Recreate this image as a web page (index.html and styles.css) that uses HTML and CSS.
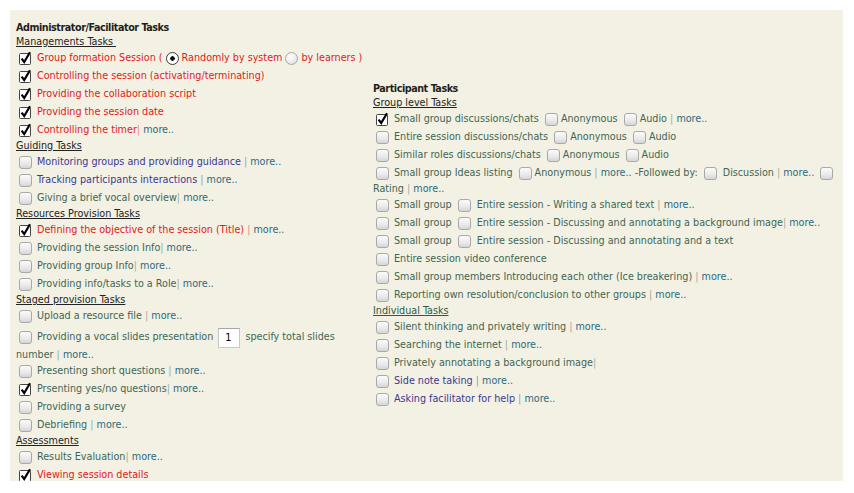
FILE: index.html
```html
<!DOCTYPE html>
<html>
<head>
<meta charset="utf-8">
<title>Tasks</title>
<link rel="stylesheet" href="styles.css">
</head>
<body>
<div class="panel">
  <div class="col left">
    <div class="title">Administrator/Facilitator Tasks</div>
    <div class="sub">Managements Tasks&nbsp;</div>
    <div class="row red"><span class="cb on"><svg width="13" height="13" viewBox="0 0 13 13"><rect x="0.5" y="1.5" width="11" height="11" rx="1" fill="#fff" stroke="#444"/><path d="M2.6 6.6 L5.2 10 L11 0.2" fill="none" stroke="#000" stroke-width="2.2"/></svg></span>Group formation Session ( <span class="rd on"></span>Randomly by system <span class="rd"></span>by learners )</div>
    <div class="row red"><span class="cb on"><svg width="13" height="13" viewBox="0 0 13 13"><rect x="0.5" y="1.5" width="11" height="11" rx="1" fill="#fff" stroke="#444"/><path d="M2.6 6.6 L5.2 10 L11 0.2" fill="none" stroke="#000" stroke-width="2.2"/></svg></span>Controlling the session (activating/terminating)</div>
    <div class="row red"><span class="cb on"><svg width="13" height="13" viewBox="0 0 13 13"><rect x="0.5" y="1.5" width="11" height="11" rx="1" fill="#fff" stroke="#444"/><path d="M2.6 6.6 L5.2 10 L11 0.2" fill="none" stroke="#000" stroke-width="2.2"/></svg></span>Providing the collaboration script</div>
    <div class="row red"><span class="cb on"><svg width="13" height="13" viewBox="0 0 13 13"><rect x="0.5" y="1.5" width="11" height="11" rx="1" fill="#fff" stroke="#444"/><path d="M2.6 6.6 L5.2 10 L11 0.2" fill="none" stroke="#000" stroke-width="2.2"/></svg></span>Providing the session date</div>
    <div class="row red"><span class="cb on"><svg width="13" height="13" viewBox="0 0 13 13"><rect x="0.5" y="1.5" width="11" height="11" rx="1" fill="#fff" stroke="#444"/><path d="M2.6 6.6 L5.2 10 L11 0.2" fill="none" stroke="#000" stroke-width="2.2"/></svg></span>Controlling the timer<span class="sep">|</span> <span class="more">more..</span></div>

    <div class="sub">Guiding Tasks</div>
    <div class="row pur"><span class="cb"></span>Monitoring groups and providing guidance <span class="sep">|</span> <span class="more">more..</span></div>
    <div class="row pur"><span class="cb"></span>Tracking participants interactions <span class="sep">|</span> <span class="more">more..</span></div>
    <div class="row grn"><span class="cb"></span>Giving a brief vocal overview<span class="sep">|</span> <span class="more">more..</span></div>

    <div class="sub">Resources Provision Tasks</div>
    <div class="row red"><span class="cb on"><svg width="13" height="13" viewBox="0 0 13 13"><rect x="0.5" y="1.5" width="11" height="11" rx="1" fill="#fff" stroke="#444"/><path d="M2.6 6.6 L5.2 10 L11 0.2" fill="none" stroke="#000" stroke-width="2.2"/></svg></span>Defining the objective of the session (Title) <span class="sep">|</span> <span class="more">more..</span></div>
    <div class="row grn"><span class="cb"></span>Providing the session Info<span class="sep">|</span> <span class="more">more..</span></div>
    <div class="row grn"><span class="cb"></span>Providing group Info<span class="sep">|</span> <span class="more">more..</span></div>
    <div class="row grn"><span class="cb"></span>Providing info/tasks to a Role<span class="sep">|</span> <span class="more">more..</span></div>

    <div class="sub">Staged provision Tasks</div>
    <div class="row grn"><span class="cb"></span>Upload a resource file <span class="sep">|</span> <span class="more">more..</span></div>
    <div class="row grn"><span class="cb"></span>Providing a vocal slides presentation <span class="num">1</span> specify total slides number <span class="sep">|</span> <span class="more">more..</span></div>
    <div class="row grn"><span class="cb"></span>Presenting short questions <span class="sep">|</span> <span class="more">more..</span></div>
    <div class="row grn"><span class="cb on"><svg width="13" height="13" viewBox="0 0 13 13"><rect x="0.5" y="1.5" width="11" height="11" rx="1" fill="#fff" stroke="#444"/><path d="M2.6 6.6 L5.2 10 L11 0.2" fill="none" stroke="#000" stroke-width="2.2"/></svg></span>Prsenting yes/no questions<span class="sep">|</span> <span class="more">more..</span></div>
    <div class="row grn"><span class="cb"></span>Providing a survey</div>
    <div class="row grn"><span class="cb"></span>Debriefing <span class="sep">|</span> <span class="more">more..</span></div>

    <div class="sub">Assessments</div>
    <div class="row grn"><span class="cb"></span>Results Evaluation<span class="sep">|</span> <span class="more">more..</span></div>
    <div class="row red"><span class="cb on"><svg width="13" height="13" viewBox="0 0 13 13"><rect x="0.5" y="1.5" width="11" height="11" rx="1" fill="#fff" stroke="#444"/><path d="M2.6 6.6 L5.2 10 L11 0.2" fill="none" stroke="#000" stroke-width="2.2"/></svg></span>Viewing session details</div>
  </div>

  <div class="col right">
    <div class="title">Participant Tasks</div>
    <div class="sub">Group level Tasks</div>
    <div class="row grn"><span class="cb on"><svg width="13" height="13" viewBox="0 0 13 13"><rect x="0.5" y="1.5" width="11" height="11" rx="1" fill="#fff" stroke="#444"/><path d="M2.6 6.6 L5.2 10 L11 0.2" fill="none" stroke="#000" stroke-width="2.2"/></svg></span>Small group discussions/chats <span class="cb in"></span>Anonymous <span class="cb in"></span>Audio <span class="sep">|</span> <span class="more">more..</span></div>
    <div class="row grn"><span class="cb"></span>Entire session discussions/chats <span class="cb in"></span>Anonymous <span class="cb in"></span>Audio</div>
    <div class="row grn"><span class="cb"></span>Similar roles discussions/chats <span class="cb in"></span>Anonymous <span class="cb in"></span>Audio</div>
    <div class="row grn"><span class="cb"></span>Small group Ideas listing <span class="cb in"></span>Anonymous <span class="sep">|</span> <span class="more">more..</span> -Followed by: <span class="cb in"></span> Discussion <span class="sep">|</span> <span class="more">more..</span> <span class="cb in"></span> Rating <span class="sep">|</span> <span class="more">more..</span></div>
    <div class="row grn"><span class="cb"></span>Small group <span class="cb in"></span> Entire session - Writing a shared text <span class="sep">|</span> <span class="more">more..</span></div>
    <div class="row grn"><span class="cb"></span>Small group <span class="cb in"></span> Entire session - Discussing and annotating a background image<span class="sep">|</span> <span class="more">more..</span></div>
    <div class="row grn"><span class="cb"></span>Small group <span class="cb in"></span> Entire session - Discussing and annotating and a text</div>
    <div class="row grn"><span class="cb"></span>Entire session video conference</div>
    <div class="row grn"><span class="cb"></span>Small group members Introducing each other (Ice breakering) <span class="sep">|</span> <span class="more">more..</span></div>
    <div class="row grn"><span class="cb"></span>Reporting own resolution/conclusion to other groups <span class="sep">|</span> <span class="more">more..</span></div>

    <div class="sub sub-green">Individual Tasks</div>
    <div class="row grn"><span class="cb"></span>Silent thinking and privately writing <span class="sep">|</span> <span class="more">more..</span></div>
    <div class="row grn"><span class="cb"></span>Searching the internet <span class="sep">|</span> <span class="more">more..</span></div>
    <div class="row grn"><span class="cb"></span>Privately annotating a background image<span class="sep">|</span></div>
    <div class="row pur"><span class="cb"></span>Side note taking <span class="sep">|</span> <span class="more">more..</span></div>
    <div class="row pur"><span class="cb"></span>Asking facilitator for help <span class="sep">|</span> <span class="more">more..</span></div>
  </div>
</div>
</body>
</html>
```

FILE: styles.css
```css
html, body {
  margin: 0;
  padding: 0;
  background: #ffffff;
}

body {
  font-family: "DejaVu Sans Condensed", "DejaVu Sans", sans-serif;
  font-stretch: condensed;
  font-size: 10.7px;
  line-height: 14px;
  color: #3f6654;
}

.panel {
  margin: 10px 0 0 10px;
  width: 833px;
  height: 471px;
  box-sizing: border-box;
  padding: 11px 3px 0 6px;
  background: #f3f1e3;
  display: flex;
  gap: 3px;
  align-items: flex-start;
}

.col.left {
  width: 354px;
  flex: none;
}

.col.right {
  flex: 1;
  margin-top: 61px;
}

.title {
  font-weight: bold;
  color: #1f1f1f;
  letter-spacing: -0.45px;
  height: 14px;
}

.sub {
  color: #222;
  text-decoration: underline;
  height: 14px;
}

.sub-green {
  color: #2c5c44;
}

.row {
  min-height: 14px;
}

.red { color: #de1b22; }
.grn { color: #3f6654; }
.pur { color: #3a3894; }

.sep {
  opacity: 0.5;
}

.more {
  color: #2c6a80;
}

.cb {
  display: inline-block;
  vertical-align: middle;
  box-sizing: border-box;
  width: 13px;
  height: 13px;
  margin: 3px 5px 2px 3px;
  border: 1px solid #a9a9a9;
  border-radius: 3px;
  background: linear-gradient(to bottom, #fbfbfb 0%, #e9e9e9 60%, #d6d6d6 100%);
}

.cb.in {
  margin: 3px 3px 2px 3px;
}

.cb.on {
  border: none;
  background: none;
  border-radius: 0;
}

.cb.on svg {
  display: block;
  overflow: visible;
}

.rd {
  display: inline-block;
  vertical-align: middle;
  box-sizing: border-box;
  width: 13px;
  height: 13px;
  margin: 3px 3px 2px 0;
  border-radius: 50%;
  border: 1px solid #a8a8a8;
  background: radial-gradient(circle at 40% 35%, #ffffff 0%, #ececec 55%, #d2d2d2 100%);
}

.rd.on {
  border: 1px solid #3a3a3a;
  background: radial-gradient(circle, #111 0 2px, #fff 2.5px);
}

.num {
  display: inline-block;
  box-sizing: border-box;
  width: 22px;
  height: 20px;
  margin: 3px 2px 0;
  padding: 2px 0 0 6px;
  vertical-align: middle;
  line-height: 14px;
  color: #000;
  background: #fff;
  border: 1px solid #c8c8c8;
  border-top-color: #a8a8a8;
}
```
